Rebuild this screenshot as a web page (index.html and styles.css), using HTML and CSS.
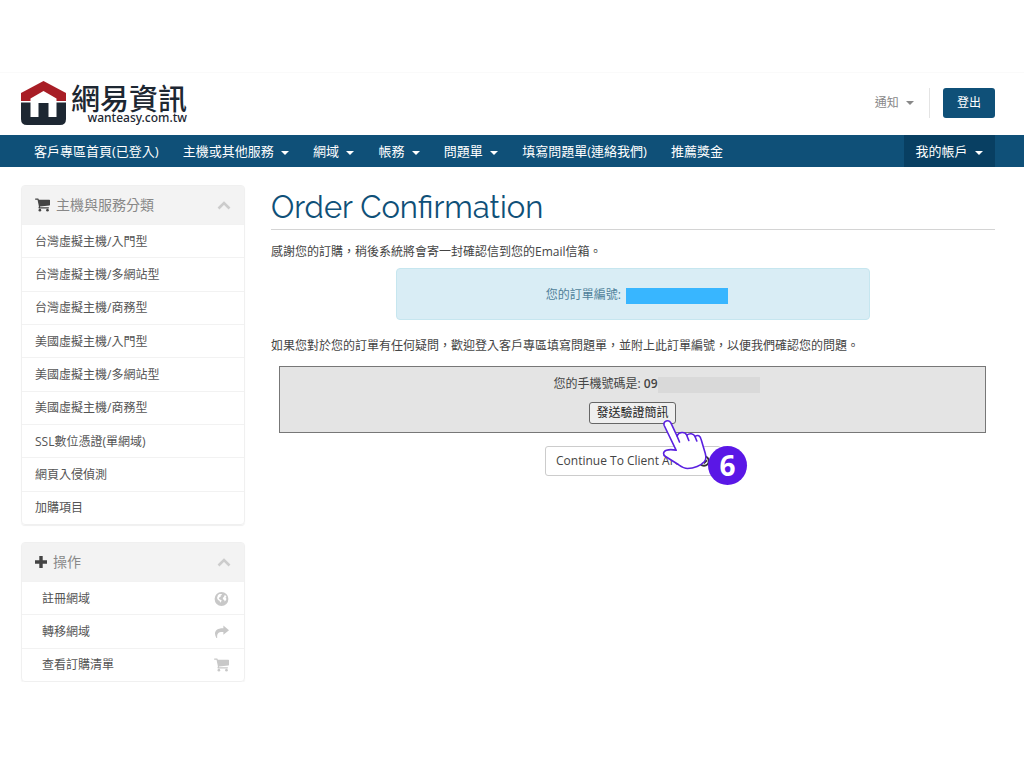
FILE: index.html
```html
<!DOCTYPE html>
<html lang="zh-Hant">
<head>
<meta charset="utf-8">
<meta name="viewport" content="width=device-width, initial-scale=1">
<title>Order Confirmation</title>
<link rel="stylesheet" href="styles.css">
</head>
<body>
<svg class="sprite" aria-hidden="true">
  <symbol id="cart" viewBox="0 0 16 14">
    <path d="M0.6 0h2.6c.4 0 .6.3.7.7l.1.6h11.3c.4 0 .7.3.7.7v4.800c0 .3-.3.600-.6.700L5.300 8.500c.1.300.1.600 0 .9h9c.9 0 .9 1.300 0 1.300H4.300c-.5 0-.8-.5-.6-.9l.5-1.200L2.700 1.300H.6C-.2 1.300-.2 0 .6 0z"/>
    <circle cx="5.200" cy="12.500" r="1.400"/><circle cx="13.300" cy="12.500" r="1.400"/>
  </symbol>
  <symbol id="chevron" viewBox="0 0 14 9">
    <path d="M1.500 7.500 7 2l5.500 5.500" fill="none" stroke="currentColor" stroke-width="2.600"/>
  </symbol>
</svg>

<header class="header">
  <a class="logo" href="#">
    <svg class="logo-mark" viewBox="0 0 45 44" aria-hidden="true">
      <path d="M22.500 0 45 12v8H0v-8z" fill="#a81e26"/>
      <path d="M0 21.500h45V38q0 6-6 6H6q-6 0-6-6z" fill="#1d2732"/>
      <path d="M9.500 17.500 22.500 10l13 7.500V36h-8V22h-10v14h-8z" fill="#fff"/>
    </svg>
    <span class="logo-text">
      <span class="logo-name">網易資訊</span>
      <span class="logo-domain">wanteasy.com.tw</span>
    </span>
  </a>
  <div class="account">
    <a class="notice" href="#">通知 <i class="caret"></i></a>
    <span class="divider"></span>
    <a class="logout" href="#">登出</a>
  </div>
</header>

<nav class="nav">
  <a href="#">客戶專區首頁(已登入)</a>
  <a href="#">主機或其他服務 <i class="caret"></i></a>
  <a href="#">網域 <i class="caret"></i></a>
  <a href="#">帳務 <i class="caret"></i></a>
  <a href="#">問題單 <i class="caret"></i></a>
  <a href="#">填寫問題單(連絡我們)</a>
  <a href="#">推薦獎金</a>
  <a class="mine" href="#">我的帳戶 <i class="caret"></i></a>
</nav>

<div class="page">
  <aside class="sidebar">
    <section class="panel">
      <h2 class="panel-head">
        <svg class="icon" aria-hidden="true"><use href="#cart"/></svg>主機與服務分類
        <svg class="chevron" aria-hidden="true"><use href="#chevron"/></svg>
      </h2>
      <div class="list categories">
        <a href="#">台灣虛擬主機/入門型</a>
        <a href="#">台灣虛擬主機/多網站型</a>
        <a href="#">台灣虛擬主機/商務型</a>
        <a href="#">美國虛擬主機/入門型</a>
        <a href="#">美國虛擬主機/多網站型</a>
        <a href="#">美國虛擬主機/商務型</a>
        <a href="#">SSL數位憑證(單網域)</a>
        <a href="#">網頁入侵偵測</a>
        <a href="#">加購項目</a>
      </div>
    </section>
    <section class="panel">
      <h2 class="panel-head">
        <svg class="icon plus" viewBox="0 0 12 12" aria-hidden="true"><path d="M4.300 0h3.400v4.300H12v3.400H7.700V12H4.300V7.700H0V4.300h4.300z"/></svg>操作
        <svg class="chevron" aria-hidden="true"><use href="#chevron"/></svg>
      </h2>
      <div class="list actions">
        <a href="#">註冊網域
          <svg class="icon" viewBox="0 0 14 14" aria-hidden="true">
            <circle cx="7" cy="7" r="6.900"/>
            <path fill="#fff" d="M3.500 3 5 2l2 0 .5.800-1.500 1 .2 1-1.500.7-.4 1 1 1 1.300.4.600.8-.8 1-.6 1.100-.8-2.100L3.500 8 2.500 6zM9.700 3.500l1.300-.3L12 5l-1 .4L12 7l-.8 1.600-1 .8-.5-1.500-1.200-.7-.2-1.200L9.700 4.600z"/>
          </svg></a>
        <a href="#">轉移網域
          <svg class="icon" viewBox="0 0 16 14" aria-hidden="true"><path d="M10 0l6 5-6 5V7C5.500 6.600 3 7.600 3.400 13.300H2.500C-.8 7.500 1.500 2.800 10 3z"/></svg></a>
        <a href="#">查看訂購清單
          <svg class="icon" aria-hidden="true"><use href="#cart"/></svg></a>
      </div>
    </section>
  </aside>

  <main class="main">
    <h1>Order Confirmation</h1>
    <p>感謝您的訂購，稍後系統將會寄一封確認信到您的Email信箱。</p>
    <div class="alert">您的訂單編號: <span class="order-mask"></span></div>
    <p>如果您對於您的訂單有任何疑問，歡迎登入客戶專區填寫問題單，並附上此訂單編號，以便我們確認您的問題。</p>
    <form class="verify">
      <div class="phone">您的手機號碼是: <b>09</b><span class="phone-mask"></span></div>
      <button class="send" type="button">發送驗證簡訊</button>
    </form>
    <div class="continue-row">
      <a class="continue" href="#">Continue To Client Area
        <svg viewBox="0 0 12 12" aria-hidden="true"><circle cx="6" cy="6" r="4.800" fill="none" stroke="currentColor" stroke-width="2"/><path d="M3 6h5M6 3.500 8.500 6 6 8.500" fill="none" stroke="currentColor" stroke-width="1.500"/></svg>
      </a>
      <svg class="hand" viewBox="0 0 48 52" aria-hidden="true">
        <path d="M2.200 7.500C.8 3.500 6.800.5 9 5.200L15 18c2-4.500 8-4.500 9.800-.8 2.500-2.200 6.700-2 8.200 1.200 3-2 5.200-.6 6 2.600l4.300 14.500c.8 3 .8 6-.8 8C39 47.500 32 50.500 25.500 50.500c-4 0-7-2.500-10-4.500L3.500 38.500C.8 37 .7 33.500 4.500 32.300c3-1 6-.8 9.700 0z" fill="#fff" stroke="#5a20e0" stroke-width="1.600" stroke-linejoin="round"/>
        <path d="M15 18l2.500 6M24.800 17.500l2 5M33 18.500l1.800 4.500" fill="none" stroke="#5a20e0" stroke-width="1.600" stroke-linecap="round"/>
      </svg>
      <span class="step">6</span>
    </div>
  </main>
</div>
</body>
</html>
```
FILE: styles.css
```css
* { box-sizing: border-box; }

body {
  margin: 0;
  padding-top: 72px;
  background: #fff;
  color: #444;
  font: 12px/20px "Open Sans", "Noto Sans CJK TC", sans-serif;
}

a { color: inherit; text-decoration: none; }
.sprite { position: absolute; width: 0; height: 0; }

.caret {
  display: inline-block;
  margin-left: 4px;
  border: 4px solid transparent;
  border-top-color: currentColor;
  border-bottom: 0;
  vertical-align: middle;
}

.header {
  display: flex;
  justify-content: space-between;
  align-items: center;
  height: 63px;
  padding: 0 29px 3px 21px;
  border-top: 1px solid #fafafa;
}

.logo { display: flex; align-items: center; gap: 5px; color: #1d2732; }
.logo-mark { width: 45px; height: 44px; }
.logo-text { display: flex; flex-direction: column; align-items: flex-end; }
.logo-name { font: 500 29px/30px "Noto Sans CJK TC", sans-serif; }
.logo-domain { font: 500 12px/12px "Noto Sans", sans-serif; }

.account { display: flex; align-items: center; color: #888; }
.divider { height: 30px; margin: 0 13px 0 15px; border-left: 1px solid #e4e4e4; }
.logout {
  padding: 5px 14px;
  border-radius: 3px;
  background: #0f5078;
  color: #fff;
}

.nav {
  display: flex;
  padding: 0 29px 0 22px;
  background: #0f5078;
  color: #fff;
  font-size: 13px;
  line-height: 32px;
}
.nav a { padding: 0 12px; white-space: nowrap; }
.nav .mine { margin-left: auto; background: #083f62; }

.page { display: flex; gap: 26px; padding: 18px 29px 0 21px; }

.sidebar { flex: 0 0 224px; display: flex; flex-direction: column; gap: 17px; }
.panel {
  border: 1px solid #f0f0f0;
  border-radius: 4px;
  box-shadow: 0 1px 1px #f0f0f0;
}
.panel-head {
  display: flex;
  align-items: center;
  gap: 6px;
  margin: 0;
  padding: 9px 13px;
  background: #f3f3f3;
  color: #888;
  font-size: 14px;
  font-weight: 400;
}
.icon { width: 15px; height: 14px; fill: currentColor; }
.panel-head .icon { color: #444; }
.panel-head .plus { width: 12px; height: 12px; }
.chevron { width: 14px; height: 9px; margin-left: auto; color: #ccc; }

.list { display: grid; grid-auto-rows: 1fr; color: #555; }
.list a {
  display: flex;
  justify-content: space-between;
  align-items: center;
  padding: 1px 15px 0 13px;
  border-top: 1px solid #f2f2f2;
}
.list .icon { color: #c8c8c8; }
.categories { min-height: 300px; }
.actions { min-height: 100px; }
.actions a { padding-left: 20px; }

.main { flex: 1; min-width: 0; }
h1 {
  margin: 0 0 12px;
  padding: 4px 0 3px;
  border-bottom: 1px solid #d4d4d4;
  color: #0f5078;
  font: 400 31px/37px Raleway, Lato, sans-serif;
}
p { margin: 0; }

.alert {
  width: 65.5%;
  margin: 6px auto 16px;
  padding: 16px 16px 14px;
  border: 1px solid #c6e6ef;
  border-radius: 4px;
  background: #d9edf5;
  color: #4f7f99;
  text-align: center;
}
.order-mask {
  display: inline-block;
  width: 102px;
  height: 16px;
  margin: 0 -8px 0 2px;
  background: #38b6ff;
  vertical-align: middle;
}

.verify {
  margin: 10px 9px 13px 8px;
  padding: 7px 0 8px;
  border: 1px solid #777;
  background: #e4e4e4;
  text-align: center;
}
.phone b { font-weight: 600; }
.phone-mask {
  display: inline-block;
  width: 102px;
  height: 16px;
  margin-right: -48px;
  background: #d9d9d9;
  vertical-align: middle;
}
.send {
  display: inline-block;
  margin-top: 8px;
  padding: 0 6px;
  border: 1px solid #666;
  border-radius: 3px;
  background: #efefef;
  color: #222;
  font: inherit;
  vertical-align: top;
}

.continue-row { position: relative; display: flex; justify-content: center; }
.continue {
  display: flex;
  align-items: center;
  gap: 10px;
  padding: 4px 10px;
  border: 1px solid #ccc;
  border-radius: 3px;
}
.continue svg { width: 12px; height: 12px; color: #333; }

/* Pointer and step number lie over the buttons */
.hand {
  position: absolute;
  top: -28px;
  left: calc(50% + 29px);
  width: 48px;
  height: 52px;
}
.step {
  position: absolute;
  top: 0;
  left: calc(50% + 75px);
  width: 39px;
  height: 39px;
  border-radius: 50%;
  background: #5a17e6;
  color: #fff;
  font: 700 28px/38px "Noto Sans", sans-serif;
  text-align: center;
}
```
